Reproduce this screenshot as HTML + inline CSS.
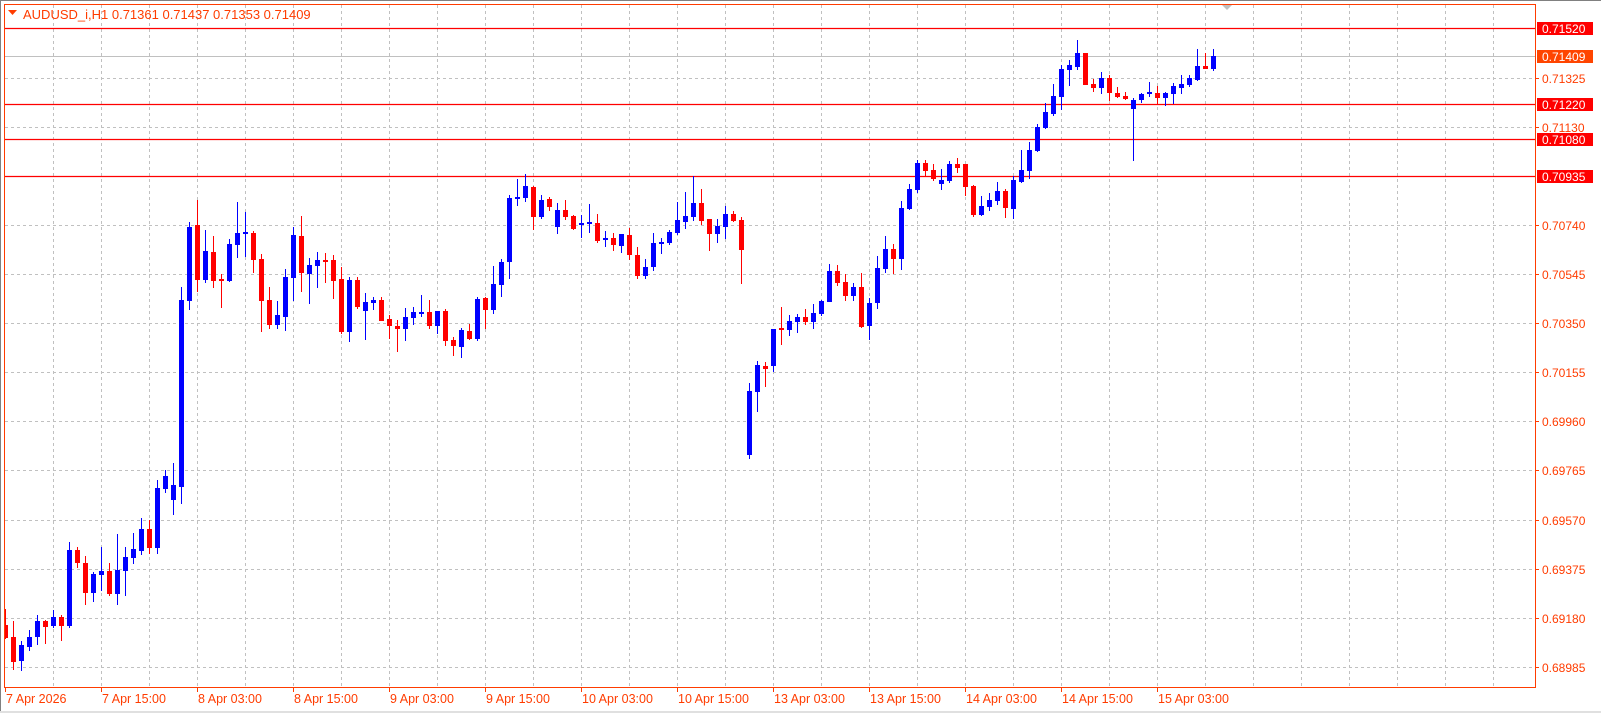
<!DOCTYPE html>
<html><head><meta charset="utf-8"><style>
html,body{margin:0;padding:0;background:#fff;width:1601px;height:713px;overflow:hidden}
svg{display:block}
text{font-family:"Liberation Sans",sans-serif}
</style></head><body>
<svg width="1601" height="713" viewBox="0 0 1601 713" xmlns="http://www.w3.org/2000/svg">
<rect width="1601" height="713" fill="#fff"/>
<line x1="0" y1="0.5" x2="1601" y2="0.5" stroke="#808080"/>
<line x1="0.5" y1="0" x2="0.5" y2="713" stroke="#808080"/>
<line x1="0" y1="712" x2="1601" y2="712" stroke="#e0e0e0" stroke-width="2"/>
<g stroke="#c0c0c0" stroke-dasharray="3,3" stroke-width="1">
<path d="M53.5 5V687M101.5 5V687M149.5 5V687M197.5 5V687M245.5 5V687M293.5 5V687M341.5 5V687M389.5 5V687M437.5 5V687M485.5 5V687M533.5 5V687M581.5 5V687M629.5 5V687M677.5 5V687M725.5 5V687M773.5 5V687M821.5 5V687M869.5 5V687M917.5 5V687M965.5 5V687M1013.5 5V687M1061.5 5V687M1109.5 5V687M1157.5 5V687M1205.5 5V687M1253.5 5V687M1301.5 5V687M1349.5 5V687M1397.5 5V687M1445.5 5V687M1493.5 5V687"/>
<path d="M5 78.5H1535M5 127.5H1535M5 176.5H1535M5 225.5H1535M5 274.5H1535M5 323.5H1535M5 372.5H1535M5 421.5H1535M5 470.5H1535M5 520.5H1535M5 569.5H1535M5 618.5H1535M5 667.5H1535"/>
</g>
<line x1="5" y1="56.5" x2="1535" y2="56.5" stroke="#c0c0c0"/>
<g stroke="#ff0000" stroke-width="1.3">
<line x1="5" y1="28.5" x2="1535" y2="28.5"/>
<line x1="5" y1="104.5" x2="1535" y2="104.5"/>
<line x1="5" y1="139.5" x2="1535" y2="139.5"/>
<line x1="5" y1="176.5" x2="1535" y2="176.5"/>
</g>
<path stroke="#0000ff" fill="none" d="M21.5 641V671M29.5 630V651M37.5 615V645M53.5 610V628M69.5 542V628M93.5 572V602M101.5 547V591M117.5 534V605M125.5 547V596M133.5 533V564M141.5 518V555M157.5 480V554M165.5 470V493M173.5 463V515M181.5 287V504M189.5 222V310M205.5 230V283M229.5 239V282M237.5 202V258M245.5 212V257M277.5 301V329M285.5 269V331M293.5 227V301M309.5 258V304M317.5 252V288M349.5 277V342M365.5 293V340M373.5 297V310M405.5 308V341M413.5 307V325M421.5 295V317M437.5 311V334M461.5 328V358M477.5 297V341M493.5 266V314M501.5 259V297M509.5 195V279M517.5 179V206M525.5 174V202M541.5 195V219M557.5 203V234M581.5 215V238M589.5 204V233M605.5 231V247M621.5 234V253M645.5 259V279M653.5 233V271M661.5 238V254M669.5 230V245M677.5 202V235M685.5 192V229M693.5 176V221M717.5 219V243M725.5 206V239M749.5 383V459M757.5 361V412M773.5 329V372M789.5 315V336M797.5 314V333M813.5 304V329M821.5 300V316M829.5 264V302M853.5 283V301M869.5 298V340M877.5 256V309M885.5 236V273M901.5 201V270M909.5 184V210M917.5 160V193M941.5 169V190M949.5 161V183M981.5 196V216M989.5 193V211M997.5 182V205M1013.5 176V219M1021.5 150V183M1029.5 142V179M1037.5 124V152M1045.5 103V129M1053.5 84V116M1061.5 65V110M1069.5 60V86M1077.5 40V70M1101.5 72V94M1133.5 98V161M1141.5 93V103M1149.5 82V97M1165.5 92V106M1173.5 83V104M1181.5 75V94M1189.5 75V87M1197.5 49V81M1213.5 49V71"/>
<path fill="#0000ff" d="M19 645h5v16h-5zM27 637h5v10h-5zM35 621h5v16h-5zM51 617h5v9h-5zM67 550h5v76h-5zM91 574h5v19h-5zM99 571h5v4h-5zM115 570h5v24h-5zM123 557h5v14h-5zM131 549h5v9h-5zM139 529h5v22h-5zM155 488h5v60h-5zM163 476h5v13h-5zM171 485h5v15h-5zM179 300h5v187h-5zM187 227h5v74h-5zM203 251h5v29h-5zM227 244h5v37h-5zM235 233h5v12h-5zM243 232h5v2h-5zM275 315h5v10h-5zM283 277h5v40h-5zM291 235h5v43h-5zM307 265h5v9h-5zM315 260h5v6h-5zM347 280h5v52h-5zM363 302h5v9h-5zM371 300h5v3h-5zM403 317h5v12h-5zM411 312h5v6h-5zM419 312h5v2h-5zM435 311h5v15h-5zM459 330h5v17h-5zM475 299h5v40h-5zM491 284h5v26h-5zM499 262h5v23h-5zM507 198h5v64h-5zM515 197h5v2h-5zM523 186h5v12h-5zM539 200h5v17h-5zM555 210h5v17h-5zM579 223h5v2h-5zM587 222h5v2h-5zM603 238h5v2h-5zM619 234h5v12h-5zM643 267h5v9h-5zM651 243h5v24h-5zM659 242h5v2h-5zM667 232h5v11h-5zM675 220h5v13h-5zM683 216h5v6h-5zM691 203h5v14h-5zM715 226h5v8h-5zM723 214h5v13h-5zM747 391h5v64h-5zM755 365h5v27h-5zM771 329h5v37h-5zM787 321h5v9h-5zM795 317h5v5h-5zM811 313h5v9h-5zM819 301h5v13h-5zM827 271h5v31h-5zM851 287h5v9h-5zM867 303h5v23h-5zM875 268h5v35h-5zM883 249h5v20h-5zM899 208h5v51h-5zM907 189h5v20h-5zM915 163h5v27h-5zM939 180h5v4h-5zM947 164h5v17h-5zM979 206h5v9h-5zM987 200h5v7h-5zM995 191h5v10h-5zM1011 180h5v29h-5zM1019 170h5v12h-5zM1027 150h5v21h-5zM1035 127h5v24h-5zM1043 112h5v16h-5zM1051 96h5v18h-5zM1059 69h5v28h-5zM1067 65h5v5h-5zM1075 53h5v14h-5zM1099 78h5v10h-5zM1131 100h5v9h-5zM1139 94h5v6h-5zM1147 92h5v2h-5zM1163 93h5v5h-5zM1171 86h5v8h-5zM1179 84h5v4h-5zM1187 78h5v7h-5zM1195 66h5v14h-5zM1211 56h5v13h-5z"/>
<path stroke="#ff0000" fill="none" d="M5.5 609V639M13.5 621V670M45.5 620V644M61.5 615V641M77.5 547V568M85.5 556V605M109.5 563V596M149.5 520V554M197.5 200V292M213.5 236V288M221.5 274V308M253.5 231V273M261.5 254V332M269.5 287V329M301.5 216V292M325.5 253V283M333.5 255V299M341.5 267V334M357.5 277V309M381.5 297V321M389.5 315V339M397.5 320V352M429.5 300V329M445.5 309V346M453.5 337V356M469.5 324V340M485.5 297V329M533.5 186V230M549.5 197V211M565.5 200V220M573.5 215V230M597.5 214V243M613.5 233V251M629.5 228V260M637.5 247V279M701.5 189V225M709.5 219V251M733.5 211V222M741.5 217V284M765.5 362V387M781.5 307V345M805.5 309V325M837.5 265V286M845.5 274V301M861.5 273V328M893.5 244V274M925.5 160V176M933.5 164V181M957.5 158V173M965.5 164V196M973.5 185V217M1005.5 189V218M1085.5 53V85M1093.5 79V92M1109.5 75V101M1117.5 87V98M1125.5 92V100M1157.5 86V104M1205.5 53V69"/>
<path fill="#ff0000" d="M5 625h3v13h-3zM11 637h5v25h-5zM43 621h5v6h-5zM59 617h5v9h-5zM75 550h5v13h-5zM83 563h5v30h-5zM107 571h5v23h-5zM147 529h5v19h-5zM195 225h5v55h-5zM211 252h5v29h-5zM219 279h5v2h-5zM251 233h5v27h-5zM259 259h5v42h-5zM267 300h5v25h-5zM299 236h5v37h-5zM323 260h5v2h-5zM331 260h5v21h-5zM339 279h5v53h-5zM355 280h5v27h-5zM379 300h5v21h-5zM387 319h5v7h-5zM395 326h5v3h-5zM427 312h5v14h-5zM443 311h5v30h-5zM451 340h5v6h-5zM467 331h5v8h-5zM483 298h5v12h-5zM531 187h5v30h-5zM547 199h5v8h-5zM563 210h5v7h-5zM571 216h5v13h-5zM595 223h5v18h-5zM611 238h5v7h-5zM627 235h5v20h-5zM635 255h5v21h-5zM699 203h5v18h-5zM707 219h5v15h-5zM731 214h5v7h-5zM739 220h5v30h-5zM763 366h5v3h-5zM779 328h5v2h-5zM803 317h5v5h-5zM835 271h5v12h-5zM843 282h5v14h-5zM859 287h5v40h-5zM891 249h5v10h-5zM923 163h5v8h-5zM931 170h5v9h-5zM955 164h5v4h-5zM963 164h5v23h-5zM971 186h5v29h-5zM1003 191h5v17h-5zM1083 53h5v32h-5zM1091 84h5v4h-5zM1107 78h5v15h-5zM1115 93h5v4h-5zM1123 96h5v3h-5zM1155 93h5v5h-5zM1203 66h5v3h-5z"/>
<g stroke="#ff3c00" fill="none">
<path d="M4.5 4.5H1535.5V687.5H4.5Z"/>
<path d="M1535 78.5h4M1535 127.5h4M1535 225.5h4M1535 274.5h4M1535 323.5h4M1535 372.5h4M1535 421.5h4M1535 470.5h4M1535 520.5h4M1535 569.5h4M1535 618.5h4M1535 667.5h4"/>
<path d="M5.5 687v5M101.5 687v5M197.5 687v5M293.5 687v5M389.5 687v5M485.5 687v5M581.5 687v5M677.5 687v5M773.5 687v5M869.5 687v5M965.5 687v5M1061.5 687v5M1157.5 687v5"/>
</g>
<path d="M1222 5h10l-5 5z" fill="#c0c0c0"/>
<path d="M8 10h9l-4.5 5z" fill="#ff3c00"/>
<text x="23" y="19" font-size="13" fill="#ff3c00">AUDUSD_i,H1  0.71361 0.71437 0.71353 0.71409</text>
<g font-size="12">
<rect x="1537" y="22" width="56" height="13" fill="#ff0000"/>
<text x="1542" y="33" fill="#fff">0.71520</text>
<rect x="1537" y="50" width="56" height="13" fill="#ff4500"/>
<text x="1542" y="61" fill="#fff">0.71409</text>
<rect x="1537" y="98" width="56" height="13" fill="#ff0000"/>
<text x="1542" y="109" fill="#fff">0.71220</text>
<rect x="1537" y="133" width="56" height="13" fill="#ff0000"/>
<text x="1542" y="144" fill="#fff">0.71080</text>
<rect x="1537" y="170" width="56" height="13" fill="#ff0000"/>
<text x="1542" y="181" fill="#fff">0.70935</text>
<g fill="#ff3c00">
<text x="1542" y="83">0.71325</text>
<text x="1542" y="132">0.71130</text>
<text x="1542" y="230">0.70740</text>
<text x="1542" y="279">0.70545</text>
<text x="1542" y="328">0.70350</text>
<text x="1542" y="377">0.70155</text>
<text x="1542" y="426">0.69960</text>
<text x="1542" y="475">0.69765</text>
<text x="1542" y="525">0.69570</text>
<text x="1542" y="574">0.69375</text>
<text x="1542" y="623">0.69180</text>
<text x="1542" y="672">0.68985</text>
</g>
</g>
<g font-size="12.5" fill="#ff3c00">
<text x="6" y="703">7 Apr 2026</text>
<text x="102" y="703">7 Apr 15:00</text>
<text x="198" y="703">8 Apr 03:00</text>
<text x="294" y="703">8 Apr 15:00</text>
<text x="390" y="703">9 Apr 03:00</text>
<text x="486" y="703">9 Apr 15:00</text>
<text x="582" y="703">10 Apr 03:00</text>
<text x="678" y="703">10 Apr 15:00</text>
<text x="774" y="703">13 Apr 03:00</text>
<text x="870" y="703">13 Apr 15:00</text>
<text x="966" y="703">14 Apr 03:00</text>
<text x="1062" y="703">14 Apr 15:00</text>
<text x="1158" y="703">15 Apr 03:00</text>
</g>
</svg>
</body></html>
